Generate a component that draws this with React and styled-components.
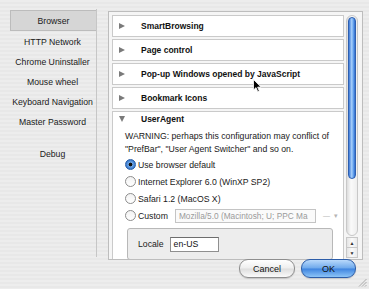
import styled, { createGlobalStyle } from "styled-components";

const Global = createGlobalStyle`
  body {
    margin: 0;
    background: #ececec;
    font-family: "Liberation Sans", Arial, sans-serif;
  }
`;

const Window = styled.div`
  position: relative;
  width: 369px;
  height: 289px;
  display: flex;
  flex-direction: column;
  background: repeating-linear-gradient(#ededed 0px, #ededed 2px, #e8e8e8 2px, #e8e8e8 4px);
  overflow: hidden;
`;

const Main = styled.div`
  display: flex;
  height: 248px;
  padding: 9px 6px 0 9px;
  gap: 11px;
`;

const Sidebar = styled.div`
  width: 87px;
  border-right: 1px solid #c6c6c6;
  padding-top: 1px;
  display: flex;
  flex-direction: column;
  align-items: stretch;
`;

const NavItem = styled.div`
  height: ${(p) => (p.$selected ? "19px" : "20px")};
  margin-left: ${(p) => (p.$selected ? "1px" : "0")};
  margin-top: ${(p) => (p.$spaced ? "12px" : "0")};
  margin-bottom: ${(p) => (p.$selected ? "1px" : "0")};
  display: flex;
  align-items: center;
  justify-content: center;
  font-size: 8.7px;
  color: #1a1a1a;
  white-space: nowrap;
  background: ${(p) => (p.$selected ? "#d6d6d6" : "transparent")};
  border: ${(p) => (p.$selected ? "1px solid #bcbcbc" : "none")};
  border-right: none;
`;

const Panel = styled.div`
  flex: 1;
  margin-top: 2px;
  height: 244px;
  border: 1px solid #bdbdbd;
  background: #f5f5f5;
  display: flex;
  padding: 3px 4px 0 3px;
  gap: 2px;
`;

const List = styled.div`
  flex: 1;
  display: flex;
  flex-direction: column;
  gap: 2px;
  overflow: hidden;
`;

const Row = styled.div`
  flex-shrink: 0;
  background: #fff;
  border: 1px solid #cacaca;
  ${(p) => (p.$open ? "" : "height: 20px;")}
`;

const Header = styled.div`
  height: ${(p) => (p.$open ? "14px" : "20px")};
  display: flex;
  align-items: center;
  padding-left: 6px;
  gap: 15px;
  font-size: 8.5px;
  font-weight: bold;
  color: #111;
`;

const Arrow = styled.span`
  width: 0;
  height: 0;
  ${(p) =>
    p.$down
      ? "border-left: 3px solid transparent; border-right: 3px solid transparent; border-top: 6px solid #7a7a7a; margin-right: 1px;"
      : "border-top: 3px solid transparent; border-bottom: 3px solid transparent; border-left: 6px solid #7a7a7a; margin-right: 1px;"}
`;

const Body = styled.div`
  padding: 4px 0 0 12px;
  font-size: 8.7px;
  color: #1a1a1a;
`;

const Warning = styled.div`
  line-height: 13px;
  white-space: nowrap;
`;

const Options = styled.div`
  display: flex;
  flex-direction: column;
`;

const Option = styled.div`
  height: 17px;
  display: flex;
  align-items: center;
  gap: 2px;
  white-space: nowrap;
`;

const Radio = styled.span`
  width: 9px;
  height: 9px;
  border-radius: 50%;
  flex-shrink: 0;
  border: 1px solid ${(p) => (p.$on ? "#2a5fa8" : "#8d8d8d")};
  background: ${(p) =>
    p.$on
      ? "radial-gradient(circle at 50% 50%, #111 0 1.6px, #6fa6e6 2.2px, #2c6fc7 5px)"
      : "linear-gradient(#f2f2f2, #ffffff)"};
`;

const CustomField = styled.div`
  margin-left: 5px;
  width: 136px;
  height: 12px;
  border: 1px solid #c4c4c4;
  background: #fafafa;
  color: #9a9a9a;
  font-size: 8.3px;
  line-height: 12px;
  padding-left: 3px;
  overflow: hidden;
  white-space: nowrap;
`;

const Popup = styled.span`
  margin-left: 5px;
  color: #b5b5b5;
  font-size: 7px;
  letter-spacing: 1px;
`;

const LocaleBox = styled.div`
  margin: 4px 10px 0 2px;
  height: 30px;
  border: 1px solid #b8b8b8;
  border-radius: 3px;
  background: #ededed;
  display: flex;
  align-items: center;
  padding: 0 0 0 10px;
  gap: 6px;
`;

const LocaleInput = styled.div`
  width: 44px;
  height: 13px;
  background: #fff;
  border: 1px solid #8f8f8f;
  border-top-color: #6d6d6d;
  font-size: 8.7px;
  line-height: 13px;
  padding-left: 3px;
  color: #111;
`;

const Scrollbar = styled.div`
  width: 12px;
  display: flex;
  flex-direction: column;
  padding-bottom: 1px;
`;

const Track = styled.div`
  flex: 1;
  border: 1px solid #c8c8c8;
  border-radius: 6px;
  background: linear-gradient(90deg, #dcdcdc, #fafafa 40%, #eeeeee);
  padding: 1px 0;
  margin-bottom: 1px;
`;

const Thumb = styled.div`
  height: 160px;
  margin: 0 1px;
  border-radius: 5px;
  border: 1px solid #2d5fb0;
  background: linear-gradient(90deg, #3b78d8, #a8d0fb 45%, #6aa6ef 70%, #2f6ccd);
`;

const StepButton = styled.div`
  height: 9px;
  border: 1px solid #c8c8c8;
  border-top: ${(p) => (p.$first ? "1px solid #c8c8c8" : "none")};
  background: linear-gradient(90deg, #e4e4e4, #fbfbfb 50%, #eaeaea);
  display: flex;
  align-items: center;
  justify-content: center;
  font-size: 5px;
  color: #333;
`;

const Footer = styled.div`
  flex: 1;
  display: flex;
  justify-content: flex-end;
  align-items: flex-start;
  padding: 2px 13px 0 0;
  gap: 6px;
`;

const Button = styled.div`
  width: ${(p) => (p.$primary ? "53px" : "54px")};
  height: 17px;
  border-radius: 9px;
  display: flex;
  align-items: center;
  justify-content: center;
  font-size: 9px;
  color: #111;
  border: 1px solid ${(p) => (p.$primary ? "#2d5da8" : "#8e8e8e")};
  background: ${(p) =>
    p.$primary
      ? "linear-gradient(#b9d9fb 0%, #6ea9ec 48%, #3f84df 52%, #8cc4f7 100%)"
      : "linear-gradient(#ffffff 0%, #eeeeee 48%, #dedede 52%, #fafafa 100%)"};
  box-shadow: 0 1px 1px rgba(0, 0, 0, 0.15);
`;

const Cursor = styled.svg`
  position: absolute;
  left: 253px;
  top: 79px;
`;

const Grip = styled.svg`
  position: absolute;
  right: 2px;
  bottom: 2px;
`;

const sections = ["SmartBrowsing", "Page control", "Pop-up Windows opened by JavaScript", "Bookmark Icons"];
const navItems = ["Browser", "HTTP Network", "Chrome Uninstaller", "Mouse wheel", "Keyboard Navigation", "Master Password"];

export default function App() {
  return (
    <>
      <Global />
      <Window>
        <Main>
          <Sidebar>
            {navItems.map((n, i) => (
              <NavItem key={n} $selected={i === 0}>
                {n}
              </NavItem>
            ))}
            <NavItem $spaced>Debug</NavItem>
          </Sidebar>
          <Panel>
            <List>
              {sections.map((s) => (
                <Row key={s}>
                  <Header>
                    <Arrow />
                    {s}
                  </Header>
                </Row>
              ))}
              <Row $open>
                <Header $open>
                  <Arrow $down />
                  UserAgent
                </Header>
                <Body>
                  <Warning>WARNING: perhaps this configuration may conflict of</Warning>
                  <Warning>"PrefBar", "User Agent Switcher" and so on.</Warning>
                  <Options>
                    <Option>
                      <Radio $on />
                      Use browser default
                    </Option>
                    <Option>
                      <Radio />
                      Internet Explorer 6.0 (WinXP SP2)
                    </Option>
                    <Option>
                      <Radio />
                      Safari 1.2 (MacOS X)
                    </Option>
                    <Option>
                      <Radio />
                      Custom
                      <CustomField>Mozilla/5.0 (Macintosh; U; PPC Ma</CustomField>
                      <Popup>— ▾</Popup>
                    </Option>
                  </Options>
                  <LocaleBox>
                    Locale
                    <LocaleInput>en-US</LocaleInput>
                  </LocaleBox>
                </Body>
              </Row>
            </List>
            <Scrollbar>
              <Track>
                <Thumb />
              </Track>
              <StepButton $first>▲</StepButton>
              <StepButton>▼</StepButton>
            </Scrollbar>
          </Panel>
        </Main>
        <Footer>
          <Button>Cancel</Button>
          <Button $primary>OK</Button>
        </Footer>
        <Cursor width="9" height="14" viewBox="0 0 9 14">
          <path d="M0.5 0.5 L0.5 11 L3 8.6 L4.8 12.8 L6.3 12.1 L4.6 8.1 L8 8.1 Z" fill="#000" stroke="#fff" strokeWidth="0.8" />
        </Cursor>
        <Grip width="9" height="9" viewBox="0 0 9 9">
          <path d="M8.5 1 L1 8.5 M8.5 4 L4 8.5 M8.5 7 L7 8.5" stroke="#9a9a9a" strokeWidth="0.8" />
        </Grip>
      </Window>
    </>
  );
}
